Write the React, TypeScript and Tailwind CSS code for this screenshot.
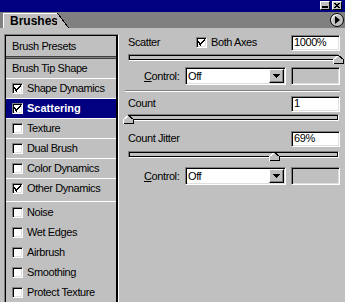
import React from "react";

function Check({ checked }: { checked: boolean }) {
  return (
    <span className="w-[11px] h-[11px] shrink-0 bg-white border border-t-[#808080] border-l-[#808080] border-r-white border-b-white shadow-[inset_1px_1px_0_#000,inset_-1px_-1px_0_#dfdfdf] flex items-center justify-center">
      {checked && (
        <svg width="7" height="7" viewBox="0 0 7 7" shapeRendering="crispEdges">
          <rect x="6" y="0" width="1" height="1" fill="#000" />
          <rect x="5" y="1" width="2" height="1" fill="#000" />
          <rect x="0" y="2" width="1" height="1" fill="#000" />
          <rect x="4" y="2" width="2" height="1" fill="#000" />
          <rect x="0" y="3" width="2" height="1" fill="#000" />
          <rect x="3" y="3" width="2" height="1" fill="#000" />
          <rect x="1" y="4" width="3" height="1" fill="#000" />
          <rect x="1" y="5" width="2" height="1" fill="#000" />
          <rect x="2" y="6" width="1" height="1" fill="#000" />
        </svg>
      )}
    </span>
  );
}

function Sunken({ className, children }: { className: string; children?: React.ReactNode }) {
  return (
    <div
      className={
        "border border-t-[#808080] border-l-[#808080] border-r-white border-b-white shadow-[inset_1px_1px_0_#000,inset_-1px_-1px_0_#dfdfdf] " +
        className
      }
    >
      {children}
    </div>
  );
}

function Thumb() {
  return (
    <svg width="11" height="9" viewBox="0 0 11 9" shapeRendering="crispEdges">
      <polygon points="5.5,0.5 10.5,4.5 10.5,8.5 0.5,8.5 0.5,4.5" fill="#c0c0c0" />
      <polyline points="0.5,8.5 0.5,4.5 5.5,0.5" fill="none" stroke="#fff" strokeWidth="1" />
      <polyline points="5.5,0.5 10.5,4.5 10.5,8.5 0.5,8.5" fill="none" stroke="#000" strokeWidth="1" />
    </svg>
  );
}

function Slider({ pos, className }: { pos: number; className: string }) {
  return (
    <div className={"relative h-[10px] w-[211px] ml-[3px] " + className}>
      <div className="h-[7px] w-full border border-t-[#808080] border-l-[#808080] border-r-white border-b-white">
        <div className="h-full w-full border border-black bg-[#c0c0c0]" />
      </div>
      <div className="absolute top-[1px]" style={{ left: pos - 5 }}>
        <Thumb />
      </div>
    </div>
  );
}

function ControlRow({ className }: { className: string }) {
  return (
    <div className={"flex items-center h-[18px] " + className}>
      <span className="ml-[19px] w-[41px]">
        <span className="underline">C</span>ontrol:
      </span>
      <Sunken className="w-[101px] h-[18px] bg-white flex items-center">
        <span className="pl-[2px] flex-1">Off</span>
        <span className="w-[15px] h-[14px] mr-[1px] bg-[#c0c0c0] border border-t-white border-l-white border-r-black border-b-black shadow-[inset_-1px_-1px_0_#808080] flex items-center justify-center">
          <svg width="7" height="4" viewBox="0 0 7 4" shapeRendering="crispEdges">
            <polygon points="0,0 7,0 3.5,4" fill="#000" />
          </svg>
        </span>
      </Sunken>
      <Sunken className="ml-[5px] w-[49px] h-[18px] bg-[#c0c0c0]" />
    </div>
  );
}

const items: { label: string; checked: boolean; sel?: boolean; tall?: boolean }[] = [
  { label: "Shape Dynamics", checked: true },
  { label: "Scattering", checked: true, sel: true },
  { label: "Texture", checked: false },
  { label: "Dual Brush", checked: false },
  { label: "Color Dynamics", checked: false },
  { label: "Other Dynamics", checked: true, tall: true },
];
const items2 = ["Noise", "Wet Edges", "Airbrush", "Smoothing", "Protect Texture"];

export default function App() {
  return (
    <div className="w-[345px] h-[302px] overflow-hidden bg-[#c0c0c0] flex flex-col text-[11px] leading-none tracking-[-0.4px] text-black font-['Liberation_Sans',Arial,sans-serif]">
      {/* title bar */}
      <div className="h-[12px] bg-[#000080] flex justify-end items-start pt-[1px] pr-[3px] gap-[2px] shrink-0">
        <div className="w-[10px] h-[9px] bg-[#c0c0c0] border border-t-white border-l-white border-r-black border-b-black flex items-end justify-center pb-[1px]">
          <div className="w-[6px] h-[2px] bg-black" />
        </div>
        <div className="w-[10px] h-[9px] bg-[#c0c0c0] border border-t-white border-l-white border-r-black border-b-black flex items-center justify-center">
          <svg width="6" height="5" viewBox="0 0 6 5" shapeRendering="crispEdges">
            <path d="M0 0h2v1H0zM4 0h2v1H4zM1 1h4v1H1zM2 2h2v1H2zM1 3h4v1H1zM0 4h2v1H0zM4 4h2v1H4z" fill="#000" />
          </svg>
        </div>
      </div>
      {/* tab strip */}
      <div className="h-[16px] bg-[#808080] flex items-end pl-[3px] shrink-0">
        <div className="flex h-[15px]">
          <div className="w-[54px] h-[15px] bg-[#c0c0c0] border-t border-l border-white pl-[6px] flex items-center font-bold text-[12px] tracking-normal">
            Brushes
          </div>
          <svg width="12" height="15" viewBox="0 0 12 15" shapeRendering="crispEdges">
            <polygon points="0,0 1,0 12,15 0,15" fill="#c0c0c0" />
            <line x1="0" y1="0.5" x2="1" y2="0.5" stroke="#fff" />
            <line x1="0.5" y1="0" x2="11.5" y2="15" stroke="#000" />
          </svg>
        </div>
        <div className="ml-auto mr-[1px] mb-[1px] w-[14px] h-[14px] rounded-full bg-[#c0c0c0] border border-black shadow-[inset_1px_1px_0_#fff] flex items-center justify-center">
          <svg width="5" height="8" viewBox="0 0 5 8">
            <polygon points="0,0 5,4 0,8" fill="#000" />
          </svg>
        </div>
      </div>
      {/* body */}
      <div className="flex-1 flex">
        {/* list */}
        <div className="mt-[6px] ml-[4px] w-[115px] h-[300px] shrink-0 border-l border-t border-[#808080] border-r border-r-white">
          <div className="h-full border-l border-t border-black border-r-2 flex flex-col">
            <div className="h-[20px] flex items-center pl-[6px]">Brush Presets</div>
            <div className="h-[3px] border-t border-b border-[#404040] bg-[#808080]" />
            <div className="h-[20px] flex items-center pl-[6px] border-b border-white">Brush Tip Shape</div>
            {items.map((it) => (
              <div
                key={it.label}
                className={
                  "flex items-center pl-[6px] gap-[4px] border-b border-white " +
                  (it.tall ? "h-[23px] pb-[3px] " : "h-[20px] ") +
                  (it.sel ? "bg-[#000080] text-white font-bold tracking-normal" : "")
                }
              >
                <Check checked={it.checked} />
                <span>{it.label}</span>
              </div>
            ))}
            {items2.map((l) => (
              <div key={l} className="h-[20px] flex items-center pl-[6px] gap-[4px]">
                <Check checked={false} />
                <span>{l}</span>
              </div>
            ))}
          </div>
        </div>
        {/* right panel */}
        <div className="flex-1 flex flex-col pl-[6px] pr-[5px] pt-[7px]">
          <div className="flex items-center h-[15px]">
            <span className="ml-[3px] w-[68px]">Scatter</span>
            <Check checked={true} />
            <span className="ml-[4px]">Both Axes</span>
            <Sunken className="ml-auto w-[49px] h-[16px] bg-white flex items-center pl-[2px]">1000%</Sunken>
          </div>
          <Slider pos={210} className="mt-[4px]" />
          <ControlRow className="mt-[3px]" />
          <div className="mt-[5px] h-[2px] border-t border-[#808080] border-b border-b-white" />
          <div className="mt-[4px] flex items-center h-[15px]">
            <span className="ml-[3px]">Count</span>
            <Sunken className="ml-auto w-[49px] h-[16px] bg-white flex items-center pl-[2px]">1</Sunken>
          </div>
          <Slider pos={0} className="mt-[3px]" />
          <div className="mt-[7px] flex items-center h-[15px]">
            <span className="ml-[3px]">Count Jitter</span>
            <Sunken className="ml-auto w-[49px] h-[16px] bg-white flex items-center pl-[2px]">69%</Sunken>
          </div>
          <Slider pos={146} className="mt-[5px]" />
          <ControlRow className="mt-[6px]" />
        </div>
      </div>
    </div>
  );
}
